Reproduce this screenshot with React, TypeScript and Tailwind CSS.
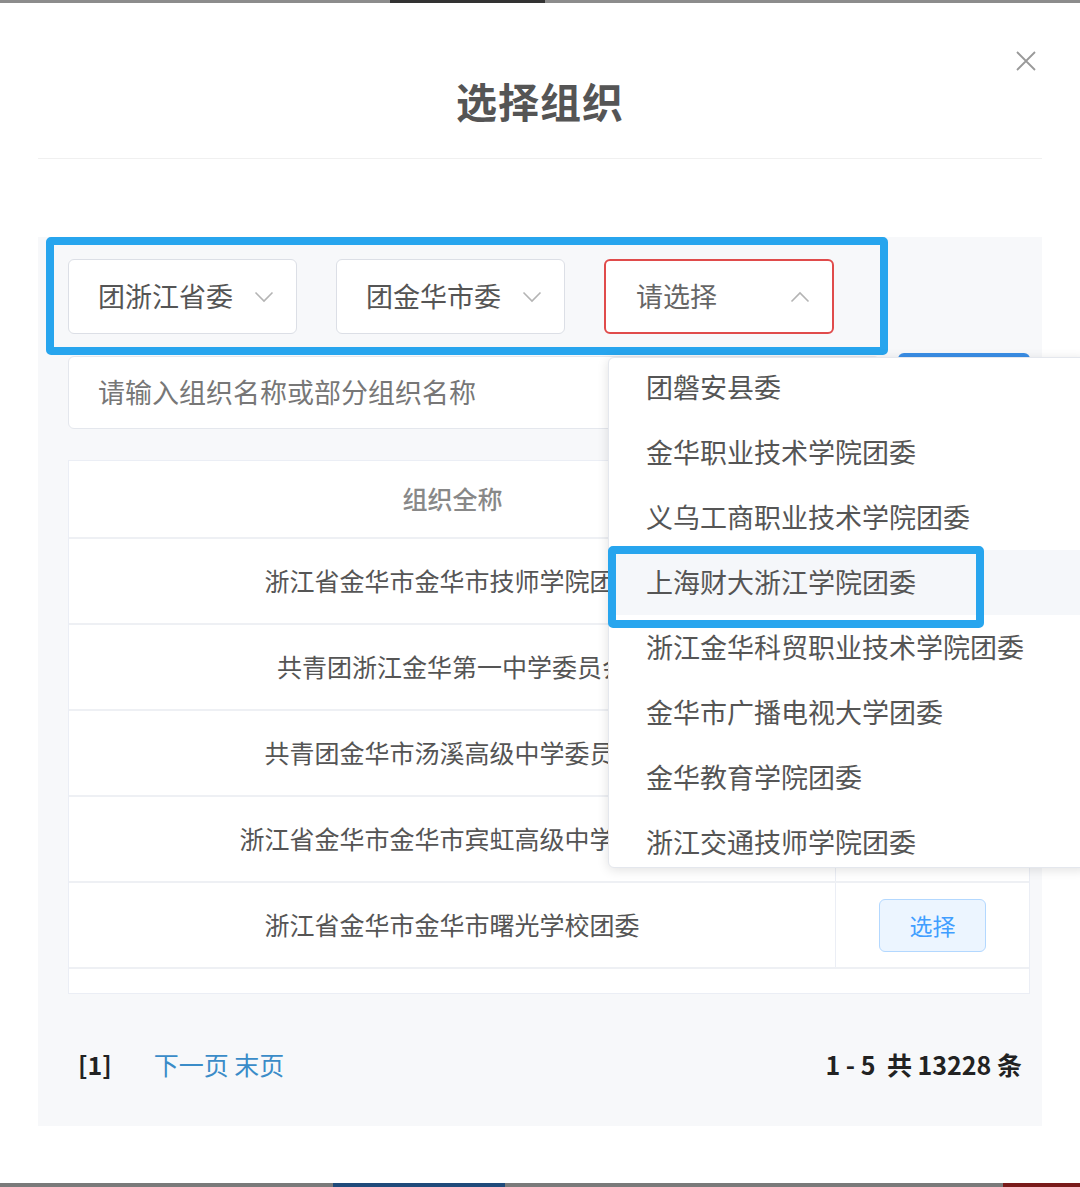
import React from "react";

const font = { fontFamily: '"Noto Sans CJK SC", "Noto Sans", sans-serif' };

function ChevronDown() {
  return (
    <svg width="20" height="12" viewBox="0 0 20 12" fill="none">
      <path d="M1.5 1.5 L10 10 L18.5 1.5" stroke="#b4b4b4" strokeWidth="1.6" />
    </svg>
  );
}
function ChevronUp() {
  return (
    <svg width="20" height="12" viewBox="0 0 20 12" fill="none">
      <path d="M1.5 10.5 L10 2 L18.5 10.5" stroke="#b4b4b4" strokeWidth="1.6" />
    </svg>
  );
}

const rows = [
  "浙江省金华市金华市技师学院团委",
  "共青团浙江金华第一中学委员会",
  "共青团金华市汤溪高级中学委员会",
  "浙江省金华市金华市宾虹高级中学团委",
  "浙江省金华市金华市曙光学校团委",
];

const options = [
  "团磐安县委",
  "金华职业技术学院团委",
  "义乌工商职业技术学院团委",
  "上海财大浙江学院团委",
  "浙江金华科贸职业技术学院团委",
  "金华市广播电视大学团委",
  "金华教育学院团委",
  "浙江交通技师学院团委",
];

export default function App() {
  return (
    <div className="relative w-[1080px] h-[1187px] overflow-hidden bg-white" style={font}>
      {/* top strip */}
      <div className="h-[3px] bg-[#8c8c8c] flex">
        <div className="ml-[390px] w-[155px] h-[3px] bg-[#333]" />
      </div>

      {/* header */}
      <div className="relative mx-[38px] h-[156px] border-b border-[#f0f0f0] flex items-start justify-center">
        <div className="mt-[71px] text-[41px] leading-[52px] font-bold text-[#555] tracking-[1px]">选择组织</div>
        <div className="absolute right-[1px] top-[43px] w-[30px] h-[30px] flex items-center justify-center">
          <svg width="22" height="22" viewBox="0 0 22 22">
            <path d="M2 2 L20 20 M20 2 L2 20" stroke="#999" strokeWidth="1.8" />
          </svg>
        </div>
      </div>

      {/* panel */}
      <div className="mx-[38px] mt-[78px] h-[889px] bg-[#f7f8fa] pl-[30px] pr-[12px] pt-[22px] flex flex-col">
        {/* selects */}
        <div className="flex gap-[39px]">
          <div className="w-[229px] h-[75px] bg-white border border-[#dcdfe6] rounded-[6px] flex items-center justify-between pl-[29px] pr-[22px]">
            <span className="text-[27px] text-[#555]">团浙江省委</span>
            <ChevronDown />
          </div>
          <div className="w-[229px] h-[75px] bg-white border border-[#dcdfe6] rounded-[6px] flex items-center justify-between pl-[29px] pr-[22px]">
            <span className="text-[27px] text-[#555]">团金华市委</span>
            <ChevronDown />
          </div>
          <div className="w-[230px] h-[75px] bg-white border-2 border-[#e04b4b] rounded-[6px] flex items-center justify-between pl-[30px] pr-[22px]">
            <span className="text-[27px] text-[#666]">请选择</span>
            <ChevronUp />
          </div>
        </div>

        {/* search row */}
        <div className="mt-[19px] flex items-start gap-[18px]">
          <div className="shrink-0 mt-[3px] w-[812px] h-[73px] bg-white border border-[#e4e7ed] rounded-[6px] flex items-center pl-[29px]">
            <span className="text-[27px] text-[#777]">请输入组织名称或部分组织名称</span>
          </div>
          <div className="shrink-0 w-[132px] h-[78px] bg-[#3a8ee6] rounded-[6px]" />
        </div>

        {/* table */}
        <div className="mt-[29px] w-[962px] bg-white border border-[#ebeef5] flex flex-col">
          <div className="h-[78px] flex border-b-2 border-[#eef0f4]">
            <div className="w-[767px] flex items-center justify-center text-[25px] text-[#888] font-medium">组织全称</div>
            <div className="flex-1" />
          </div>
          {rows.map((r) => (
            <div key={r} className="h-[86px] flex border-b-2 border-[#eef0f4]">
              <div className="w-[767px] flex items-center justify-center text-[25px] text-[#555] border-r border-[#ebeef5]">{r}</div>
              <div className="flex-1 flex items-center justify-center">
                <div className="w-[107px] h-[53px] rounded-[6px] bg-[#ecf5ff] border border-[#b3d8ff] flex items-center justify-center text-[23px] text-[#409eff]">选择</div>
              </div>
            </div>
          ))}
          <div className="h-[24px]" />
        </div>

        {/* pagination */}
        <div className="mt-[52px] flex items-center justify-between pl-[10px] pr-[8px]">
          <div className="flex items-center gap-[42px] text-[25px]">
            <span className="font-bold text-[#222]">[1]</span>
            <span className="text-[#3a8cc8]">下一页 末页</span>
          </div>
          <span className="text-[25px] font-bold text-[#222]">1 - 5&nbsp;&nbsp;共 13228 条</span>
        </div>
      </div>

      {/* bottom strip */}
      <div className="absolute left-0 bottom-0 w-[1080px] h-[4px] bg-[#7a7a7a] flex">
        <div className="ml-[333px] w-[172px] h-[4px] bg-[#1f4a7a]" />
        <div className="ml-[498px] w-[77px] h-[4px] bg-[#7a1a1a]" />
      </div>

      {/* annotation frame around selects */}
      <div className="absolute left-[46px] top-[237px] w-[842px] h-[118px] border-[8px] border-[#27a5ee] rounded-[5px]" />

      {/* dropdown */}
      <div className="absolute left-[608px] top-[357px] w-[480px] h-[511px] bg-white rounded-[6px] shadow-[0_2px_12px_rgba(0,0,0,0.12)] border border-[#e4e7ed] overflow-hidden">
        <div className="-mt-[3px]">
          {options.map((o, i) => (
            <div
              key={o}
              className={
                i === 3
                  ? "h-[65px] flex items-center pl-[37px] text-[27px] text-[#555] bg-[#f5f7fa]"
                  : "h-[65px] flex items-center pl-[37px] text-[27px] text-[#555]"
              }
            >
              {o}
            </div>
          ))}
        </div>
      </div>

      {/* annotation frame around option */}
      <div className="absolute left-[608px] top-[546px] w-[376px] h-[82px] border-[8px] border-[#27a5ee] rounded-[5px]" />
    </div>
  );
}
